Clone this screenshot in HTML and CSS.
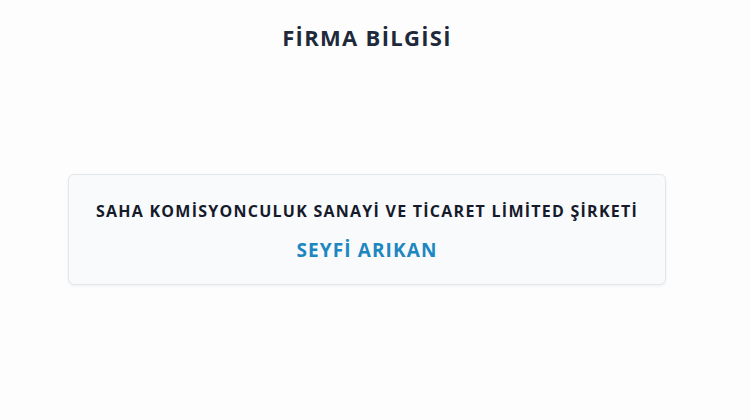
FILE: index.html
```html
<!DOCTYPE html>
<html lang="tr">
<head>
<meta charset="utf-8">
<link rel="stylesheet" href="styles.css">
</head>
<body>
<main class="page">
  <h1 class="title">FİRMA BİLGİSİ</h1>
  <section class="card">
    <p class="company">SAHA KOMİSYONCULUK SANAYİ VE TİCARET LİMİTED ŞİRKETİ</p>
    <p class="person">SEYFİ ARIKAN</p>
  </section>
</main>
</body>
</html>
```
FILE: styles.css
```css
html, body {
  margin: 0;
  padding: 0;
  background: #fdfdfd;
}
.page {
  width: 734px;
  height: 420px;
  display: flex;
  flex-direction: column;
  align-items: center;
  font-family: "Open Sans", "DejaVu Sans", sans-serif;
}
.title {
  margin: 22px 0 0 0;
  font-size: 22px;
  line-height: 30px;
  font-weight: 700;
  color: #1e293b;
  letter-spacing: 1.3px;
}
.card {
  margin-top: 122px;
  width: 598px;
  height: 111px;
  box-sizing: border-box;
  border: 1px solid #e3e7ec;
  border-radius: 6px;
  background: #f8fafc;
  box-shadow: 0 1px 3px rgba(0,0,0,0.06);
  display: flex;
  flex-direction: column;
  align-items: center;
  padding-top: 25px;
}
.company {
  margin: 0;
  font-size: 16px;
  line-height: 22px;
  font-weight: 700;
  color: #161a2b;
  letter-spacing: 1.25px;
}
.person {
  margin: 16px 0 0 0;
  font-size: 19px;
  line-height: 24px;
  font-weight: 700;
  color: #1c87c0;
  letter-spacing: 1.1px;
}
```
